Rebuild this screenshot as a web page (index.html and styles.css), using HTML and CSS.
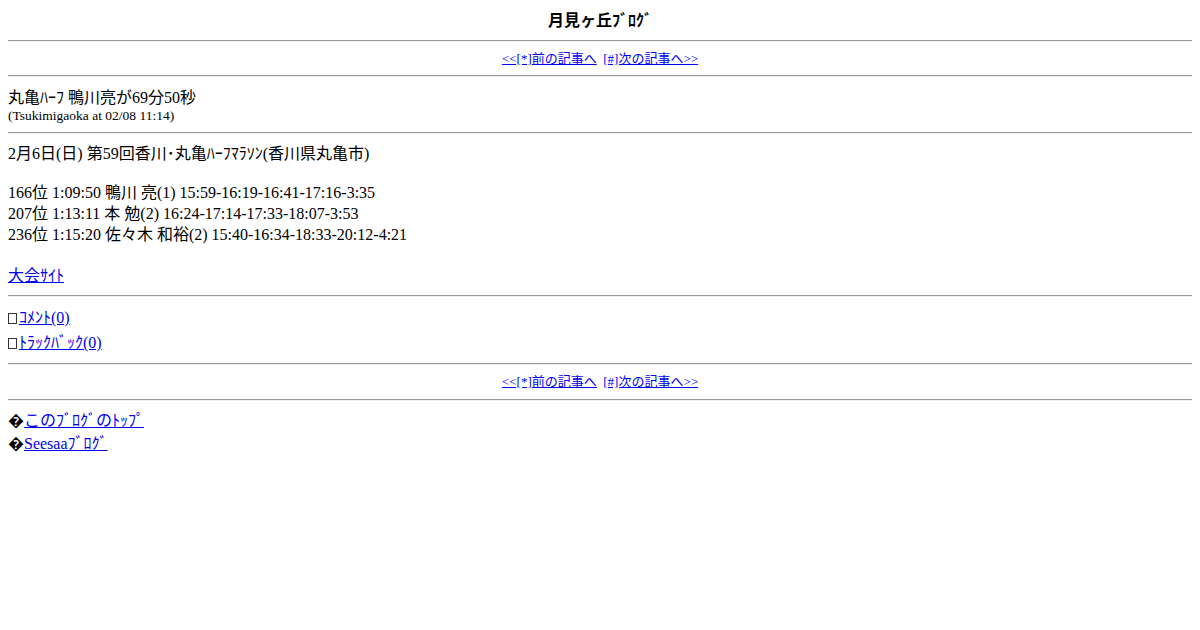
FILE: index.html
```html
<!DOCTYPE html>
<html lang="ja">
<head>
    <meta charset="UTF-8">
    <title>月見ヶ丘ﾌﾞﾛｸﾞ</title>
    <link rel="stylesheet" href="styles.css">
</head>
<body>
    <div class="blog-title">月見ヶ丘ﾌﾞﾛｸﾞ</div>
    <hr>
    <div class="nav">
        <a href="#">&lt;&lt;[*]前の記事へ</a>&nbsp;
        <a href="#">[#]次の記事へ&gt;&gt;</a>
    </div>
    <hr>
    <div class="entry-title">丸亀ﾊｰﾌ 鴨川亮が69分50秒</div>
    <div class="entry-meta">(Tsukimigaoka at 02/08 11:14)</div>
    <hr>
    <div class="entry-body">
        <p>2月6日(日) 第59回香川･丸亀ﾊｰﾌﾏﾗｿﾝ(香川県丸亀市)</p>
        <p>166位 1:09:50 鴨川 亮(1) 15:59-16:19-16:41-17:16-3:35<br>
        207位 1:13:11 本 勉(2) 16:24-17:14-17:33-18:07-3:53<br>
        236位 1:15:20 佐々木 和裕(2) 15:40-16:34-18:33-20:12-4:21</p>
        <p class="site-link"><a href="#">大会ｻｲﾄ</a></p>
    </div>
    <hr>
    <div class="feedback">
        <div class="feedback-row"><span class="box"></span><a href="#">ｺﾒﾝﾄ(0)</a></div>
        <div class="feedback-row"><span class="box"></span><a href="#">ﾄﾗｯｸﾊﾞｯｸ(0)</a></div>
    </div>
    <hr>
    <div class="nav nav-bottom">
        <a href="#">&lt;&lt;[*]前の記事へ</a>&nbsp;
        <a href="#">[#]次の記事へ&gt;&gt;</a>
    </div>
    <hr>
    <div class="footer-links">
        <div>&#xFFFD;<a href="#">このﾌﾞﾛｸﾞのﾄｯﾌﾟ</a></div>
        <div>&#xFFFD;<a href="#">Seesaaﾌﾞﾛｸﾞ</a></div>
    </div>
</body>
</html>
```

FILE: styles.css
```css
body {
    margin: 8px;
    font-family: "Liberation Serif", "Noto Sans CJK JP", serif;
    font-size: 16px;
    color: #000;
    background-color: #fff;
}
a {
    color: #0000ee;
}
hr {
    margin: 7px 0;
    border: none;
    border-top: 1px solid #9a9a9a;
    border-bottom: 1px solid #eeeeee;
}
.blog-title {
    text-align: center;
    font-weight: bold;
    line-height: 22px;
    padding-top: 2px;
    padding-bottom: 1px;
}
.nav {
    text-align: center;
    font-size: 13px;
    line-height: 19px;
}
.nav-bottom {
    line-height: 20px;
}
.entry-title {
    line-height: 20px;
    padding-top: 4px;
}
.entry-meta {
    font-size: 13.5px;
    line-height: 16px;
    padding-bottom: 1px;
}
.entry-body {
    padding-top: 2px;
}
.entry-body p {
    margin: 0 0 18px;
    line-height: 21px;
}
.entry-body p:nth-child(2) {
    margin-bottom: 20px;
}
.entry-body p.site-link {
    margin-bottom: 0;
    padding-bottom: 2px;
}
.feedback {
    padding: 1px 0;
}
.feedback-row {
    line-height: 25px;
    height: 25px;
}
.box {
    display: inline-block;
    width: 9px;
    height: 11px;
    border: 1px solid #333;
    box-sizing: border-box;
    margin-right: 2px;
    vertical-align: -1px;
}
.footer-links {
    padding-top: 1px;
}
.footer-links div {
    line-height: 23px;
}
```
